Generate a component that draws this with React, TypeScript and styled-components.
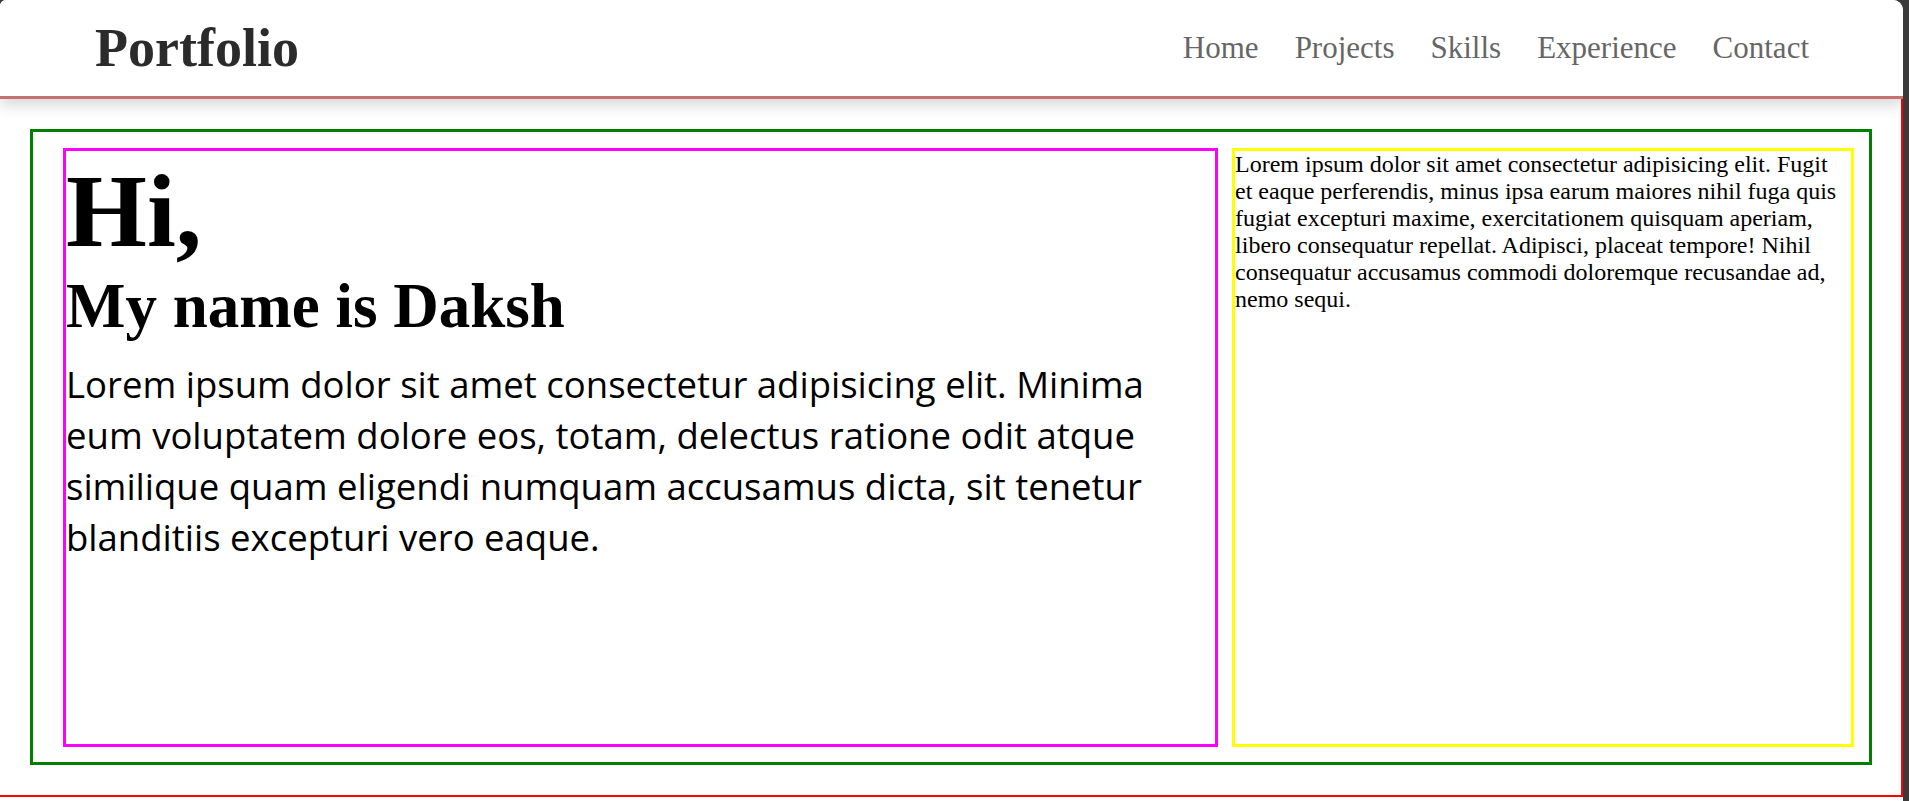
import React from "react";
import styled, { createGlobalStyle } from "styled-components";

const GlobalStyle = createGlobalStyle`
  html, body {
    margin: 0;
    padding: 0;
    background: #3a3a3a;
  }
  body {
    font-family: "Liberation Serif", "Times New Roman", serif;
  }
  * { box-sizing: border-box; }
`;

const Page = styled.div`
  width: calc(100% - 6px);
  min-height: 801px;
  background: #ffffff;
  border-top-left-radius: 6px;
  border-top-right-radius: 10px;
  overflow: hidden;
`;

const Header = styled.header`
  position: relative;
  z-index: 1;
  height: 99px;
  display: flex;
  align-items: center;
  justify-content: space-between;
  padding: 0 94px 0 95px;
  background: #ffffff;
  border-bottom: 3px solid #c87070;
  box-shadow: 0 6px 14px rgba(0, 0, 0, 0.16);
`;

const Brand = styled.h1`
  margin: 0;
  font-family: "Liberation Serif", "Times New Roman", serif;
  font-weight: 700;
  font-size: 54px;
  color: #2b2b2b;
`;

const Nav = styled.nav`
  display: flex;
  align-items: center;
  gap: 36px;
`;

const NavLink = styled.a`
  font-family: "Liberation Serif", "Times New Roman", serif;
  font-size: 31px;
  color: #666666;
  text-decoration: none;
`;

const Main = styled.main`
  padding: 30px 29px 30px 30px;
  border-right: 2px solid #ff0000;
  border-bottom: 2px solid #ff0000;
`;

const Frame = styled.section`
  border: 3px solid #008000;
  padding: 16px 15px 15px 30px;
  display: grid;
  grid-template-columns: 65fr 35fr;
  gap: 14px;
`;

const Panel = styled.div<{ $color: string }>`
  height: 599px;
  border: 3px solid ${(p) => p.$color};
  padding: 0 6px 0 0;
`;

const Greeting = styled.h1`
  margin: 0;
  font-family: "Liberation Serif", "Times New Roman", serif;
  font-weight: 700;
  font-size: 104px;
  color: #000;
`;

const Name = styled.h2`
  margin: 0;
  font-family: "Liberation Serif", "Times New Roman", serif;
  font-weight: 700;
  font-size: 63px;
  color: #000;
`;

const Intro = styled.p`
  margin: 16px 0 0;
  font-family: "Open Sans", "Noto Sans", sans-serif;
  font-size: 36.5px;
  line-height: 51px;
  color: #000;
`;

const Aside = styled.p`
  margin: 0;
  font-family: "Liberation Serif", "Times New Roman", serif;
  font-size: 24px;
  color: #000;
`;

export default function App() {
  return (
    <>
      <GlobalStyle />
      <Page>
        <Header>
          <Brand>Portfolio</Brand>
          <Nav>
            <NavLink href="#">Home</NavLink>
            <NavLink href="#">Projects</NavLink>
            <NavLink href="#">Skills</NavLink>
            <NavLink href="#">Experience</NavLink>
            <NavLink href="#">Contact</NavLink>
          </Nav>
        </Header>
        <Main>
          <Frame>
            <Panel $color="#ff00ff">
              <Greeting>Hi,</Greeting>
              <Name>My name is Daksh</Name>
              <Intro>
                Lorem ipsum dolor sit amet consectetur adipisicing elit. Minima eum voluptatem
                dolore eos, totam, delectus ratione odit atque similique quam eligendi numquam
                accusamus dicta, sit tenetur blanditiis excepturi vero eaque.
              </Intro>
            </Panel>
            <Panel $color="#ffff00">
              <Aside>
                Lorem ipsum dolor sit amet consectetur adipisicing elit. Fugit et eaque
                perferendis, minus ipsa earum maiores nihil fuga quis fugiat excepturi maxime,
                exercitationem quisquam aperiam, libero consequatur repellat. Adipisci, placeat
                tempore! Nihil consequatur accusamus commodi doloremque recusandae ad, nemo sequi.
              </Aside>
            </Panel>
          </Frame>
        </Main>
      </Page>
    </>
  );
}
